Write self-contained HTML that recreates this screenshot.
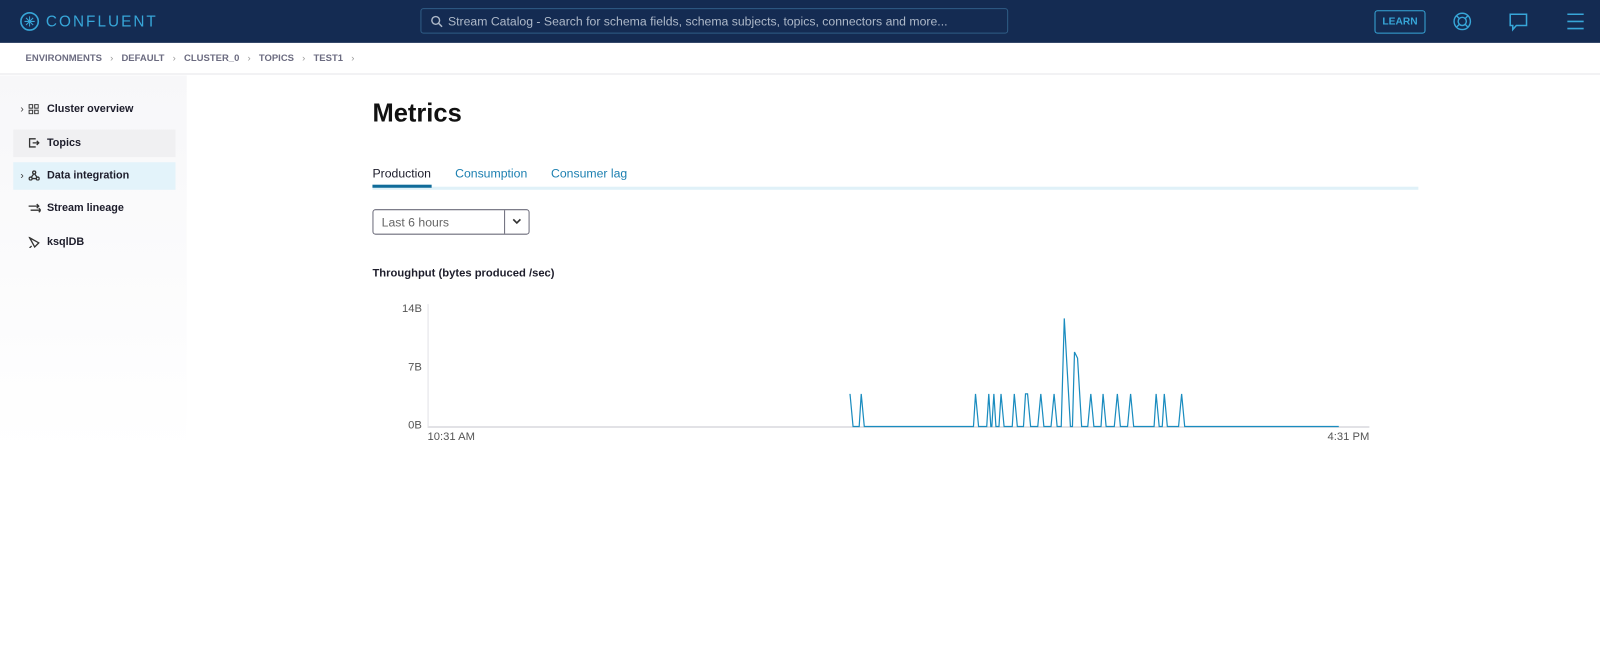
<!DOCTYPE html>
<html><head><meta charset="utf-8"><style>
*{box-sizing:border-box;margin:0;padding:0}
html,body{width:1600px;height:664px;overflow:hidden;background:#fff}
#w{position:absolute;left:0;top:0;width:1568px;height:651px;transform:scale(1.020408);transform-origin:0 0;font-family:"Liberation Sans",sans-serif;color:#1d1d2b}
.top{position:absolute;left:0;top:0;width:1568px;height:42px;background:#142b52}
.logo{position:absolute;left:19px;top:11px;display:flex;align-items:center;color:#37a6d8;font-size:15px;letter-spacing:2px}
.search{position:absolute;left:412px;top:8px;width:576px;height:25px;border:1px solid #2f5d86;border-radius:3px;color:#aeb9c9;font-size:12px;padding:5px 0 0 26px}
.learn{position:absolute;left:1347px;top:10px;width:50px;height:23px;border:1px solid #37a6d8;border-radius:3px;color:#37a6d8;font-size:10px;font-weight:bold;text-align:center;line-height:21px}
.crumb{position:absolute;left:0;top:42px;width:1568px;height:31px;border-bottom:1px solid #e6e6ea;font-size:9.3px;font-weight:bold;color:#6b6b80;padding:10px 0 0 25px}
.crumb span.s{color:#999;margin:0 8px;font-weight:normal}
.side{position:absolute;left:0;top:74px;width:183px;height:370px;background:linear-gradient(180deg,#f7f7f9 0%,#fff 100%)}
.item{position:absolute;left:13px;width:159px;height:27px;font-size:10.6px;font-weight:bold;color:#1d1d2b;line-height:27px;padding-left:33px}
.item svg{position:absolute;left:15px;top:8px}
.chev{position:absolute;left:7px;top:0;color:#333;font-weight:normal;font-size:10px}
h1{position:absolute;left:365px;top:97px;font-size:25px;font-weight:bold;color:#111}
.tabs{position:absolute;left:365px;top:161px;width:1025px;height:25px;border-bottom:3px solid #e0f1f8;font-size:12px}
.tabs span{position:absolute;top:2px;color:#1b7fb0}
.dd{position:absolute;left:365px;top:205px;width:154px;height:25px;border:1px solid #6b6b7a;border-radius:3px;font-size:12px;color:#666;padding:5px 0 0 8px}
.dd i{position:absolute;left:128px;top:0;width:1px;height:23px;background:#6b6b7a}
.lbl{position:absolute;font-size:11px;color:#555}
</style></head><body><div id="w">
<div class="top">
 <div class="logo"><svg width="20" height="20" viewBox="0 0 20 20"><circle cx="10" cy="10" r="8.5" fill="none" stroke="#37a6d8" stroke-width="1.6"/><path d="M10 5v10M5 10h10M6.5 6.5l7 7M13.5 6.5l-7 7" stroke="#37a6d8" stroke-width="1"/></svg><span style="margin-left:6px">CONFLUENT</span></div>
 <div class="search"><svg style="position:absolute;left:9px;top:6px" width="12" height="12" viewBox="0 0 12 12"><circle cx="5" cy="5" r="3.8" fill="none" stroke="#aeb9c9" stroke-width="1.4"/><path d="M8 8l3.2 3.2" stroke="#aeb9c9" stroke-width="1.5"/></svg>Stream Catalog - Search for schema fields, schema subjects, topics, connectors and more...</div>
 <div class="learn">LEARN</div>
 <svg style="position:absolute;left:1423px;top:11px" width="20" height="20" viewBox="0 0 20 20" fill="none" stroke="#37a6d8" stroke-width="1.4"><circle cx="10" cy="10" r="8"/><circle cx="10" cy="10" r="4"/><path d="M4.3 4.3l2.9 2.9M15.7 4.3l-2.9 2.9M4.3 15.7l2.9-2.9M15.7 15.7l-2.9-2.9"/></svg>
 <svg style="position:absolute;left:1478px;top:12px" width="20" height="19" viewBox="0 0 20 19" fill="none" stroke="#37a6d8" stroke-width="1.5"><path d="M2 2h16v11H8l-3.5 4v-4H2z"/></svg>
 <svg style="position:absolute;left:1535px;top:12px" width="18" height="18" viewBox="0 0 18 18" stroke="#37a6d8" stroke-width="1.5"><path d="M1 2h16M1 9h16M1 16h16"/></svg>
</div>
<div class="crumb">ENVIRONMENTS<span class="s">›</span>DEFAULT<span class="s">›</span>CLUSTER_0<span class="s">›</span>TOPICS<span class="s">›</span>TEST1<span class="s">›</span></div>
<div class="side"></div>
<div class="item" style="top:94px"><span class="chev">›</span><svg width="10" height="10" viewBox="0 0 10 10" fill="none" stroke="#333"><rect x=".5" y=".5" width="3.5" height="3.5"/><rect x="6" y=".5" width="3.5" height="3.5"/><rect x=".5" y="6" width="3.5" height="3.5"/><rect x="6" y="6" width="3.5" height="3.5"/></svg>Cluster overview</div>
<div class="item" style="top:127px;background:#f0f0f2"><svg width="11" height="10" viewBox="0 0 11 10" fill="none" stroke="#333" stroke-width="1.3"><path d="M7 1H1v8h6M4 5h6M8 3l2 2-2 2"/></svg>Topics</div>
<div class="item" style="top:159px;background:#e3f3fa"><span class="chev">›</span><svg width="11" height="10" viewBox="0 0 11 10" fill="none" stroke="#333" stroke-width="1.3"><circle cx="5.5" cy="2" r="1.5"/><circle cx="2" cy="8" r="1.5"/><circle cx="9" cy="8" r="1.5"/><path d="M5 3.5L2.7 6.7M6 3.5l2.3 3.2M3.5 8h4"/></svg>Data integration</div>
<div class="item" style="top:191px"><svg width="12" height="10" viewBox="0 0 12 10" fill="none" stroke="#333" stroke-width="1.3"><path d="M0 3h10M8 1l2 2-2 2M2 7h10M10 5l2 2-2 2"/></svg>Stream lineage</div>
<div class="item" style="top:224px"><svg width="11" height="11" viewBox="0 0 11 11" fill="none" stroke="#333" stroke-width="1.3"><path d="M1 1l9 5-4 4z M3 9l-2 2"/></svg>ksqlDB</div>
<h1>Metrics</h1>
<div class="tabs"><span style="left:0;color:#1d1d2b">Production</span><span style="left:81px">Consumption</span><span style="left:175px">Consumer lag</span><div style="position:absolute;left:0;top:20px;width:58px;height:3px;background:#0f6b99"></div></div>
<div class="dd">Last 6 hours<i></i><svg style="position:absolute;left:136px;top:8px" width="9" height="6" viewBox="0 0 9 6"><path d="M1 1l3.5 3.5L8 1" fill="none" stroke="#333" stroke-width="1.6"/></svg></div>
<div style="position:absolute;left:365px;top:262px;font-size:11px;font-weight:bold;color:#1d1d2b">Throughput (bytes produced /sec)</div>
<div class="lbl" style="left:394px;top:297px">14B</div>
<div class="lbl" style="left:400px;top:354px">7B</div>
<div class="lbl" style="left:400px;top:411px">0B</div>
<div class="lbl" style="left:419px;top:422px">10:31 AM</div>
<div class="lbl" style="left:1301px;top:422px">4:31 PM</div>
<svg style="position:absolute;left:0;top:0" width="1568" height="651">
<line x1="419.5" y1="298" x2="419.5" y2="418" stroke="#e2e2e6"/>
<line x1="419" y1="418.5" x2="1342" y2="418.5" stroke="#e2e2e6" stroke-width="2"/>
<polyline fill="none" stroke="#1a8cbf" stroke-width="1.2" points="833,386 836,418 842,418 844,386 847,418 954,418 956,386 959,418 967,418 969,386 971,418 972,418 974,386 976,418 979,418 981,386 984,418 992,418 994,386 997,418 1003,418 1005,386 1007,386 1010,418 1017,418 1020,386 1023,418 1030,418 1033,386 1036,418 1040,418 1043,312 1049,418 1051,418 1053,345 1056,351 1060,418 1066,418 1069,386 1072,418 1079,418 1081,386 1084,418 1092,418 1095,386 1098,418 1105,418 1108,386 1111,418 1131,418 1133,386 1136,418 1139,418 1141,386 1144,418 1155,418 1158,386 1161,418 1312,418"/>
</svg>
</div></body></html>
